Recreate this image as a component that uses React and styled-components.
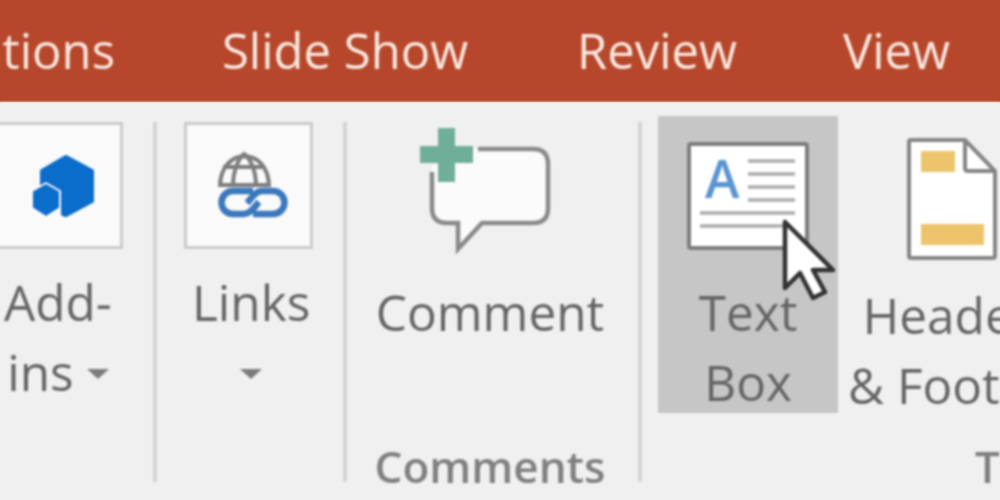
import React from 'react';
import styled, { createGlobalStyle } from 'styled-components';

const GlobalStyle = createGlobalStyle`
  html, body {
    margin: 0;
    padding: 0;
    background: #f0f0f0;
  }
`;

const Window = styled.div`
  width: 1000px;
  height: 500px;
  overflow: hidden;
  display: flex;
  flex-direction: column;
  font-family: "Open Sans", "Noto Sans", sans-serif;
`;

const TabBar = styled.div`
  height: 102px;
  flex: none;
  background: #b7472a;
  display: flex;
  align-items: center;
  padding-bottom: 2px;
  box-sizing: border-box;
  box-shadow: 0 1px 3px #d9a898;
`;

const Tab = styled.div`
  flex: none;
  display: flex;
  justify-content: ${p => p.$justify || 'flex-start'};
  width: ${p => p.$width}px;
  margin-left: ${p => p.$left}px;
  font-size: 49px;
  line-height: 1;
  font-weight: 500;
  color: #f8e8e1;
  white-space: nowrap;
  filter: blur(0.8px);
`;

const Ribbon = styled.div`
  flex: 1;
  display: flex;
  background: #f0f0f0;
  padding-top: 14px;
  min-height: 0;
  filter: blur(0.8px);
`;

const Divider = styled.div`
  flex: none;
  width: 4px;
  margin: 6px 0 18px;
  background: #d4d4d4;
`;

const Group = styled.div`
  flex: none;
  width: ${p => p.$width}px;
  margin-left: ${p => p.$left || 0}px;
  display: flex;
  flex-direction: column;
`;

const Tools = styled.div`
  flex: 1;
  display: flex;
  min-height: 0;
`;

const GroupLabel = styled.div`
  height: 56px;
  font-size: 44px;
  line-height: 44px;
  font-weight: 600;
  color: #808080;
  white-space: nowrap;
  text-align: ${p => p.$align || 'center'};
  padding-left: ${p => p.$padLeft || 0}px;
  padding-right: ${p => p.$padRight || 0}px;
`;

const Tool = styled.div`
  flex: none;
  position: relative;
  width: ${p => p.$width}px;
  height: 297px;
  margin-left: ${p => p.$left || 0}px;
  display: flex;
  flex-direction: column;
  align-items: ${p => p.$align || 'center'};
  background: ${p => (p.$active ? '#c6c6c6' : 'transparent')};
`;

const IconSlot = styled.div`
  flex: none;
  height: ${p => p.$height}px;
  margin-top: ${p => p.$top}px;
  margin-left: ${p => p.$left || 0}px;
  display: flex;
  align-items: flex-start;
`;

const Tile = styled.div`
  flex: none;
  box-sizing: border-box;
  width: ${p => p.$width}px;
  height: 127px;
  margin-top: 6px;
  margin-left: ${p => p.$left || 0}px;
  padding-left: ${p => p.$padLeft || 0}px;
  background: #fafafa;
  border: 3px solid #cbcbcb;
  display: flex;
  align-items: center;
  justify-content: center;
`;

const ToolLabel = styled.div`
  font-size: 49.5px;
  line-height: 70px;
  font-weight: 500;
  margin-top: ${p => p.$top || 0}px;
  margin-left: ${p => p.$left || 0}px;
  color: #656565;
  white-space: nowrap;
  text-align: center;
`;

const Caret = styled.span`
  display: inline-block;
  width: 0;
  height: 0;
  vertical-align: middle;
  margin-bottom: 8px;
  border-left: 11px solid transparent;
  border-right: 11px solid transparent;
  border-top: 10px solid #7c7c7c;
`;

const CursorOverlay = styled.svg`
  position: absolute;
  left: 120px;
  top: 100px;
  overflow: visible;
`;

const AddInsIcon = () => (
  <svg width="64" height="64" viewBox="0 0 64 64">
    <path
      d="M35 3 L61 17 V47 L35 61 L32 60 V36 L11 30 V17 Z"
      fill="#0a6ccb"
      stroke="#0a6ccb"
      strokeWidth="4"
      strokeLinejoin="round"
    />
    <path
      d="M15 29 L29 37 V54 L15 63 L1 54 V37 Z"
      fill="#0a6ccb"
      stroke="#fafafa"
      strokeWidth="2"
      strokeLinejoin="round"
    />
  </svg>
);

const LinksIcon = () => (
  <svg width="72" height="72" viewBox="0 0 72 72">
    <g fill="none" stroke="#7d7d7d" strokeWidth="4">
      <path d="M3 37 C3 -4 52 -4 52 37" />
      <path d="M16 36 C16 20 22 8 27 4 C33 8 39 20 39 36" />
      <path d="M6 17 H48 M3 35 H52" />
    </g>
    <g fill="none" stroke="#3b78be" strokeWidth="6.5">
      <path d="M36 41 H16 A11.5 11.5 0 0 0 16 64 H27 C34 64 38 56 42 52" />
      <path d="M36 64 H56 A11.5 11.5 0 0 0 56 41 H45 C38 41 34 49 30 53" />
    </g>
  </svg>
);

const CommentIcon = () => (
  <svg width="134" height="128" viewBox="0 0 134 128">
    <path
      d="M12 40 V82 Q12 97 27 97 H38 V123 L62 97 H113 Q128 97 128 82 V38 Q128 23 113 23 H52 Z"
      fill="#fbfbfb"
    />
    <path
      d="M12 46 V82 Q12 97 27 97 H38 V123 L62 97 H113 Q128 97 128 82 V38 Q128 23 113 23 H58"
      fill="none"
      stroke="#8a8a8a"
      strokeWidth="4.5"
    />
    <path d="M18 2 H35 V20 H53 V37 H35 V56 H18 V37 H0 V20 H18 Z" fill="#6fae98" />
  </svg>
);

const TextBoxIcon = () => (
  <svg width="122" height="110" viewBox="0 0 122 110">
    <rect x="2" y="2" width="118" height="104" rx="2" fill="#ffffff" stroke="#7d7d7d" strokeWidth="4" />
    <text x="18" y="56" fontSize="52" fontFamily="Open Sans, sans-serif" fontWeight="600" fill="#5b95d3">A</text>
    <g stroke="#acacac" strokeWidth="3.5">
      <path d="M61 19 H108 M61 32 H108 M61 45 H108 M61 58 H108" />
      <path d="M13 71 H108 M13 84 H97" />
    </g>
  </svg>
);

const HeaderIcon = () => (
  <svg width="92" height="122" viewBox="0 0 92 122">
    <path d="M2 4 Q2 2 4 2 H58 L88 33 V118 Q88 120 86 120 H4 Q2 120 2 118 Z" fill="#ffffff" stroke="#858585" strokeWidth="4" />
    <path d="M58 2 V30 Q58 33 61 33 H88" fill="none" stroke="#858585" strokeWidth="4" />
    <rect x="14" y="13" width="34" height="21" fill="#ecc46c" />
    <rect x="14" y="86" width="63" height="21" fill="#ecc46c" />
  </svg>
);

const Cursor = () => (
  <CursorOverlay width="54" height="84" viewBox="0 0 54 84">
    <path
      d="M7 6 V72 L22 57 L35 82 L47 76 L35 54 H55 Z"
      fill="#ffffff"
      stroke="#333333"
      strokeWidth="4.5"
      strokeLinejoin="round"
    />
  </CursorOverlay>
);

export default function App() {
  return (
    <Window>
      <GlobalStyle />
      <TabBar>
        <Tab $width={115} $left={0} $justify="flex-end">Animations</Tab>
        <Tab $left={107} $width={246}>Slide Show</Tab>
        <Tab $left={109} $width={160}>Review</Tab>
        <Tab $left={106} $width={110}>View</Tab>
      </TabBar>
      <Ribbon>
        <Group $width={153}>
          <Tools>
            <Tool $width={153} $align="flex-start">
              <Tile $width={134} $left={-11} $padLeft={14}>
                <AddInsIcon />
              </Tile>
              <ToolLabel $top={18} $left={4}>
                Add-
                <br />
                ins <Caret />
              </ToolLabel>
            </Tool>
          </Tools>
        </Group>
        <Divider />
        <Group $width={186}>
          <Tools>
            <Tool $width={186} $align="flex-start">
              <Tile $width={129} $left={27} $padLeft={8}>
                <LinksIcon />
              </Tile>
              <ToolLabel $top={18} $left={35}>
                Links
                <br />
                <Caret />
              </ToolLabel>
            </Tool>
          </Tools>
        </Group>
        <Divider />
        <Group $width={291}>
          <Tools>
            <Tool $width={291}>
              <IconSlot $top={10} $height={133} $left={-11}>
                <CommentIcon />
              </IconSlot>
              <ToolLabel $top={18} $left={-5}>Comment</ToolLabel>
            </Tool>
          </Tools>
          <GroupLabel $padRight={5}>Comments</GroupLabel>
        </Group>
        <Divider />
        <Group $width={358} $left={16}>
          <Tools>
            <Tool $width={180} $active>
              <IconSlot $top={26} $height={115} $left={0}>
                <TextBoxIcon />
              </IconSlot>
              <ToolLabel $top={20}>
                Text
                <br />
                Box
              </ToolLabel>
              <Cursor />
            </Tool>
            <Tool $width={220} $left={10} $align="flex-start">
              <IconSlot $top={22} $height={122} $left={59}>
                <HeaderIcon />
              </IconSlot>
              <ToolLabel $top={20} $left={0}>
                Header
                <br />
                &amp; Footer
              </ToolLabel>
            </Tool>
          </Tools>
          <GroupLabel $align="left" $padLeft={317}>Text</GroupLabel>
        </Group>
      </Ribbon>
    </Window>
  );
}
